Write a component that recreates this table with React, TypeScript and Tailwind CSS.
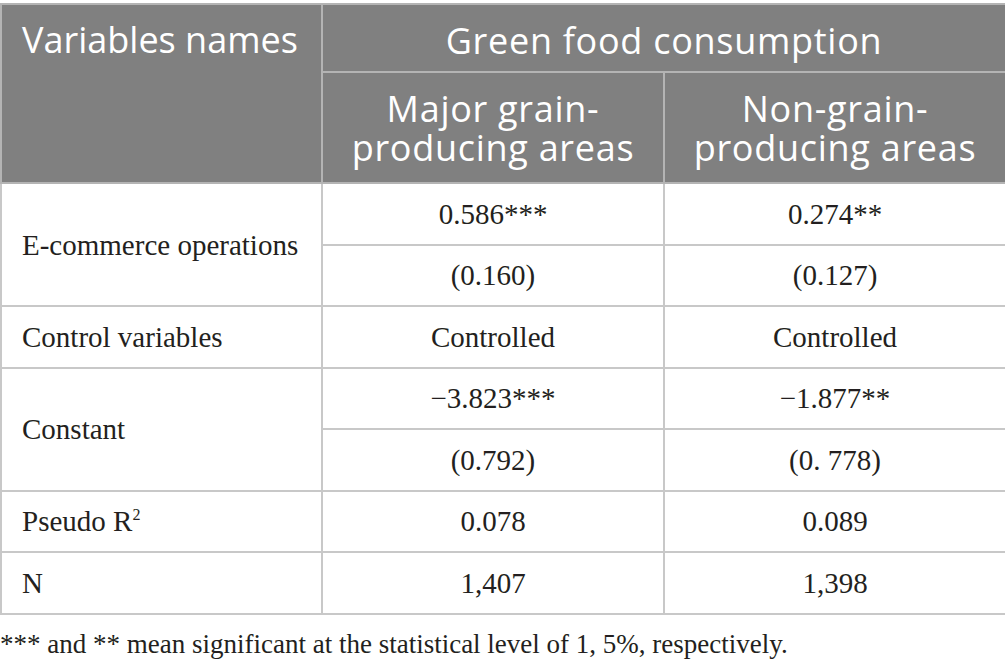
import React from "react";

interface BodyRow {
	label: React.ReactNode;
	values: [string, string][];
}

const rows: BodyRow[] = [
	{ label: "E-commerce operations", values: [["0.586***", "0.274**"], ["(0.160)", "(0.127)"]] },
	{ label: "Control variables", values: [["Controlled", "Controlled"]] },
	{ label: "Constant", values: [["\u22123.823***", "\u22121.877**"], ["(0.792)", "(0. 778)"]] },
	{
		label: (
			<>
				Pseudo R<sup className="text-[16px] -top-[11px]">2</sup>
			</>
		),
		values: [["0.078", "0.089"]],
	},
	{ label: "N", values: [["1,407", "1,398"]] },
];

const serif = "font-['Minion_Pro','Liberation_Serif',serif]";
const sans = "font-['Open_Sans',sans-serif]";

export default function App() {
	return (
		<div className="bg-white w-[1005px] h-[668px] pt-[3px] text-[#231f20]">
			<table className="border-collapse table-fixed w-[1005px]">
				<colgroup>
					<col className="w-[321px]" />
					<col className="w-[342px]" />
					<col className="w-[342px]" />
				</colgroup>
				<thead className={`${sans} font-normal text-white text-[36px] leading-[39px]`}>
					<tr className="h-[68px]">
						<th
							rowSpan={2}
							className="bg-[#808080] border-2 border-[#b4b4b4] align-top text-left font-normal pl-[20px] pt-[15px]"
						>
							Variables names
						</th>
						<th
							colSpan={2}
							className="bg-[#808080] border-2 border-[#b4b4b4] text-center font-normal tracking-[0.02em] pt-[4px]"
						>
							Green food consumption
						</th>
					</tr>
					<tr className="h-[111px]">
						<th className="bg-[#808080] border-2 border-[#b4b4b4] text-center font-normal tracking-[0.02em] px-2">
							Major grain-
							<br />
							producing areas
						</th>
						<th className="bg-[#808080] border-2 border-[#b4b4b4] text-center font-normal tracking-[0.02em] px-2">
							Non-grain-
							<br />
							producing areas
						</th>
					</tr>
				</thead>
				<tbody className={`${serif} text-[29px] leading-[32px]`}>
					{rows.map((row, i) =>
						row.values.map((vals, j) => (
							<tr key={`${i}-${j}`} className="h-[61.5px]">
								{j === 0 && (
									<td
										rowSpan={row.values.length}
										className="border-2 border-[#c8c8c8] pl-[20px] align-middle"
									>
										{row.label}
									</td>
								)}
								<td className="border-2 border-[#c8c8c8] text-center">{vals[0]}</td>
								<td className="border-2 border-[#c8c8c8] text-center">{vals[1]}</td>
							</tr>
						)),
					)}
				</tbody>
			</table>
			<p className={`${serif} text-[27px] leading-[32px] mt-[13px]`}>
				*** and ** mean significant at the statistical level of 1, 5%, respectively.
			</p>
		</div>
	);
}
